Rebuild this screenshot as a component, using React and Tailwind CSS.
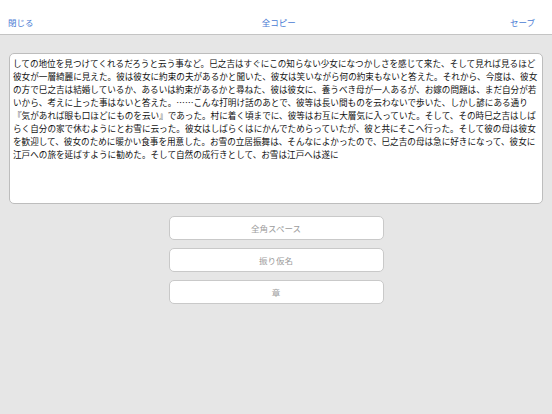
import React from "react";

const lines = [
  "しての地位を見つけてくれるだろうと云う事など。巳之吉はすぐにこの知らない少女になつかしさを感じて来た、そして見れば見るほど",
  "彼女が一層綺麗に見えた。彼は彼女に約束の夫があるかと聞いた、彼女は笑いながら何の約束もないと答えた。それから、今度は、彼女",
  "の方で巳之吉は結婚しているか、あるいは約束があるかと尋ねた、彼は彼女に、養うべき母が一人あるが、お嫁の問題は、まだ自分が若",
  "いから、考えに上った事はないと答えた。……こんな打明け話のあとで、彼等は長い間ものを云わないで歩いた、しかし諺にある通り",
  "『気があれば眼も口ほどにものを云い』であった。村に着く頃までに、彼等はお互に大層気に入っていた。そして、その時巳之吉はしば",
  "らく自分の家で休むようにとお雪に云った。彼女はしばらくはにかんでためらっていたが、彼と共にそこへ行った。そして彼の母は彼女",
  "を歓迎して、彼女のために暖かい食事を用意した。お雪の立居振舞は、そんなによかったので、巳之吉の母は急に好きになって、彼女に",
  "江戸への旅を延ばすように勧めた。そして自然の成行きとして、お雪は江戸へは遂に",
];

const font = { fontFamily: '"Noto Sans CJK JP", "Noto Sans", sans-serif' };

export default function App() {
  return (
    <div
      className="w-[552px] h-[414px] bg-[#e6e6e6] flex flex-col overflow-hidden"
      style={font}
    >
      <div className="h-[35px] shrink-0 bg-white border-b border-[#c4c4c4] pt-[10px] px-[8px] flex items-center justify-between text-[8.5px] text-[#4a7bd4]">
        <span>閉じる</span>
        <span className="ml-[14px]">全コピー</span>
        <span className="mr-[9px]">セーブ</span>
      </div>
      <div className="mx-[9px] mt-[18px] h-[151px] bg-white border border-[#bdbdbd] rounded-[5px] pt-[3px] pl-[3px] overflow-hidden text-[8.6px] leading-[13px] text-[#111111]">
        {lines.map((l, i) => (
          <div key={i} className="whitespace-nowrap">
            {l}
          </div>
        ))}
      </div>
      <div className="mt-[12px] flex flex-col items-center gap-[8px]">
        {["全角スペース", "振り仮名", "章"].map((t) => (
          <div
            key={t}
            className="w-[215px] h-[24px] bg-white border border-[#c9c9c9] rounded-[5px] flex items-center justify-center text-[8.5px] text-[#9c9c9c]"
          >
            {t}
          </div>
        ))}
      </div>
    </div>
  );
}
